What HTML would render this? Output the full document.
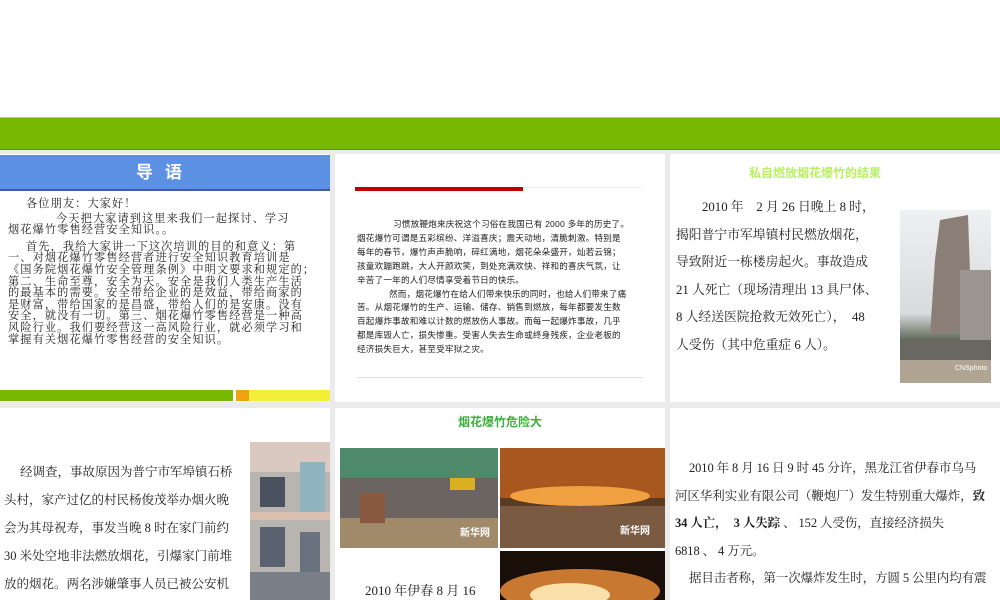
<!DOCTYPE html>
<html><head><meta charset="utf-8"><style>
*{margin:0;padding:0;box-sizing:border-box}
body{width:1000px;height:600px;overflow:hidden;background:#ebebeb;position:relative;font-family:"Liberation Serif","Noto Serif CJK SC",serif;color:#222}
.p{position:absolute;background:#fff;overflow:hidden}
.a{position:absolute}
.s{font-family:"Liberation Sans","Noto Sans CJK SC",sans-serif}
.nw div{white-space:nowrap}
</style></head><body>
<div class="a" style="left:0;top:0;width:1000px;height:117px;background:#fff"></div>
<div class="a" style="left:0;top:117px;width:1000px;height:33px;background:#76b900;border-top:1px solid #a7d45a;border-bottom:1px solid #5e9400"></div>

<div class="p" style="left:0;top:154px;width:330px;height:248px">
 <div class="a s" style="left:0;top:1px;width:330px;height:36px;background:#5b90e2;border-bottom:2px solid #3f5f9c;color:#fff;font-size:17px;font-weight:bold;text-align:center;line-height:36px;letter-spacing:12px">导语</div>
 <div class="a nw" style="left:8px;top:45px;width:322px;font-size:11.2px;line-height:11.6px;letter-spacing:1.1px">
 <div style="padding-left:18px">各位朋友：大家好！</div>
 <div style="padding-left:48px;margin-top:3px">今天把大家请到这里来我们一起探讨、学习</div>
 <div>烟花爆竹零售经营安全知识。。</div>
 <div style="padding-left:18px;margin-top:5px">首先，我给大家讲一下这次培训的目的和意义：第</div>
 <div>一、对烟花爆竹零售经营者进行安全知识教育培训是</div>
 <div>《国务院烟花爆竹安全管理条例》中明文要求和规定的；</div>
 <div>第二、生命至尊，安全为天。安全是我们人类生产生活</div>
 <div>的最基本的需要。安全带给企业的是效益，带给商家的</div>
 <div>是财富，带给国家的是昌盛，带给人们的是安康。没有</div>
 <div>安全，就没有一切。第三、烟花爆竹零售经营是一种高</div>
 <div>风险行业。我们要经营这一高风险行业，就必须学习和</div>
 <div>掌握有关烟花爆竹零售经营的安全知识。</div>
 </div>
 <div class="a" style="left:0;top:236px;width:233px;height:11px;background:#76b900"></div>
 <div class="a" style="left:236px;top:236px;width:13px;height:11px;background:#eda312"></div>
 <div class="a" style="left:249px;top:236px;width:81px;height:11px;background:#f2ee3a"></div>
</div>

<div class="p" style="left:335px;top:154px;width:330px;height:248px">
 <div class="a" style="left:20px;top:33px;width:287px;height:1px;background:#eee"></div>
 <div class="a" style="left:20px;top:33px;width:168px;height:4px;background:#c00000"></div>
 <div class="a s nw" style="left:22px;top:64px;width:300px;font-size:8.6px;line-height:13.9px;color:#222;letter-spacing:0.2px">
 <div style="padding-left:36px">习惯放鞭炮来庆祝这个习俗在我国已有 2000 多年的历史了。</div>
 <div>烟花爆竹可谓是五彩缤纷、洋溢喜庆；震天动地，清脆刺激。特别是</div>
 <div>每年的春节，爆竹声声脆响，碎红满地，烟花朵朵盛开，灿若云锦；</div>
 <div>孩童欢蹦跑跳，大人开颜欢笑，到处充满欢快、祥和的喜庆气氛，让</div>
 <div>辛苦了一年的人们尽情享受着节日的快乐。</div>
 <div style="padding-left:32px">然而，烟花爆竹在给人们带来快乐的同时，也给人们带来了痛</div>
 <div>苦。从烟花爆竹的生产、运输、储存、销售到燃放，每年都要发生数</div>
 <div>百起爆炸事故和难以计数的燃放伤人事故。而每一起爆炸事故，几乎</div>
 <div>都是库毁人亡，损失惨重。受害人失去生命或终身残疾，企业老板的</div>
 <div>经济损失巨大，甚至受牢狱之灾。</div>
 </div>
 <div class="a" style="left:22px;top:223px;width:286px;height:1px;background:#e6dde0"></div>
</div>

<div class="p" style="left:670px;top:154px;width:330px;height:248px">
 <div class="a s" style="left:0;top:10px;width:290px;text-align:center;font-size:12px;font-weight:bold;color:#b8f060">私自燃放烟花爆竹的结果</div>
 <div class="a nw" style="left:6px;top:40px;width:215px;font-size:12.8px;line-height:27.5px">
 <div style="padding-left:26px">2010 年　2 月 26 日晚上 8 时，</div>
 <div>揭阳普宁市军埠镇村民燃放烟花，</div>
 <div>导致附近一栋楼房起火。事故造成</div>
 <div>21 人死亡（现场清理出 13 具尸体、</div>
 <div>8 人经送医院抢救无效死亡），　48</div>
 <div>人受伤（其中危重症 6 人）。</div>
 </div>
 <svg class="a" style="left:230px;top:56px" width="91" height="173"><defs><linearGradient id="g1" x1="0" y1="0" x2="0" y2="1"><stop offset="0" stop-color="#eef0f2"/><stop offset=".6" stop-color="#d8dadc"/><stop offset=".75" stop-color="#606a5a"/><stop offset="1" stop-color="#8a8070"/></linearGradient></defs><rect width="91" height="173" fill="url(#g1)"/><polygon points="40,10 68,5 72,120 30,125 35,50" fill="#8a7e76"/><polygon points="60,60 91,60 91,130 60,130" fill="#9a958e"/><rect x="0" y="130" width="91" height="43" fill="#6a6660"/><rect x="0" y="150" width="91" height="23" fill="#b0a592"/><text x="55" y="160" font-size="7" fill="#fff" font-family="Liberation Sans">CNSphoto</text></svg>
</div>

<div class="p" style="left:0;top:408px;width:330px;height:192px">
 <div class="a nw" style="left:4px;top:50px;width:245px;font-size:12.5px;line-height:28px">
 <div style="padding-left:16px">经调查，事故原因为普宁市军埠镇石桥</div>
 <div>头村，家产过亿的村民杨俊茂举办烟火晚</div>
 <div>会为其母祝寿，事发当晚 8 时在家门前约</div>
 <div>30 米处空地非法燃放烟花，引爆家门前堆</div>
 <div>放的烟花。两名涉嫌肇事人员已被公安机</div>
 </div>
 <svg class="a" style="left:250px;top:34px" width="80" height="158"><rect width="80" height="158" fill="#b8b4b0"/><rect x="0" y="0" width="80" height="30" fill="#d9c9c0"/><rect x="10" y="35" width="25" height="30" fill="#4a5260"/><rect x="50" y="20" width="25" height="50" fill="#8fb4c0"/><rect x="0" y="70" width="80" height="8" fill="#d9c0b0"/><rect x="10" y="85" width="25" height="40" fill="#5a6270"/><rect x="50" y="90" width="20" height="40" fill="#6a7280"/><rect x="0" y="130" width="80" height="28" fill="#7a8088"/></svg>
</div>

<div class="p" style="left:335px;top:408px;width:330px;height:192px">
 <div class="a s" style="left:0;top:5px;width:330px;text-align:center;font-size:12px;font-weight:bold;color:#3fae3f">烟花爆竹危险大</div>
 <svg class="a" style="left:5px;top:40px" width="158" height="100"><rect width="158" height="100" fill="#8aa6a8"/><rect y="0" width="158" height="30" fill="#4e8a6a"/><rect y="30" width="158" height="40" fill="#6c6460"/><rect y="70" width="158" height="30" fill="#a08a6a"/><rect x="20" y="45" width="25" height="30" fill="#8a5a40"/><rect x="110" y="30" width="25" height="12" fill="#d8b020"/><text x="120" y="88" font-size="10" fill="#fff" font-weight="bold" font-family="Noto Sans CJK SC">新华网</text></svg>
 <svg class="a" style="left:165px;top:40px" width="165" height="100"><rect width="165" height="100" fill="#5a3a22"/><rect y="0" width="165" height="50" fill="#a8581e"/><ellipse cx="80" cy="48" rx="70" ry="10" fill="#f0a040"/><rect y="58" width="165" height="42" fill="#7a5a40"/><text x="120" y="86" font-size="10" fill="#fff" font-weight="bold" font-family="Noto Sans CJK SC">新华网</text></svg>
 <svg class="a" style="left:165px;top:143px" width="165" height="49"><rect width="165" height="49" fill="#1a0e08"/><ellipse cx="80" cy="40" rx="80" ry="22" fill="#c87830"/><ellipse cx="70" cy="44" rx="40" ry="12" fill="#f8e0a8"/></svg>
 <div class="a" style="left:30px;top:172px;font-size:13px">2010 年伊春 8 月 16</div>
</div>

<div class="p" style="left:670px;top:408px;width:330px;height:192px">
 <div class="a nw" style="left:5px;top:47px;width:328px;font-size:12.5px;line-height:27.5px;letter-spacing:-0.1px">
 <div style="padding-left:14px">2010 年 8 月 16 日 9 时 45 分许，黑龙江省伊春市乌马</div>
 <div>河区华利实业有限公司（鞭炮厂）发生特别重大爆炸，<b>致</b></div>
 <div><b>34 人亡，　3 人失踪</b> 、 152 人受伤，直接经济损失</div>
 <div>6818 、 4 万元。</div>
 <div style="padding-left:14px">据目击者称，第一次爆炸发生时，方圆 5 公里内均有震</div>
 </div>
</div>
</body></html>
